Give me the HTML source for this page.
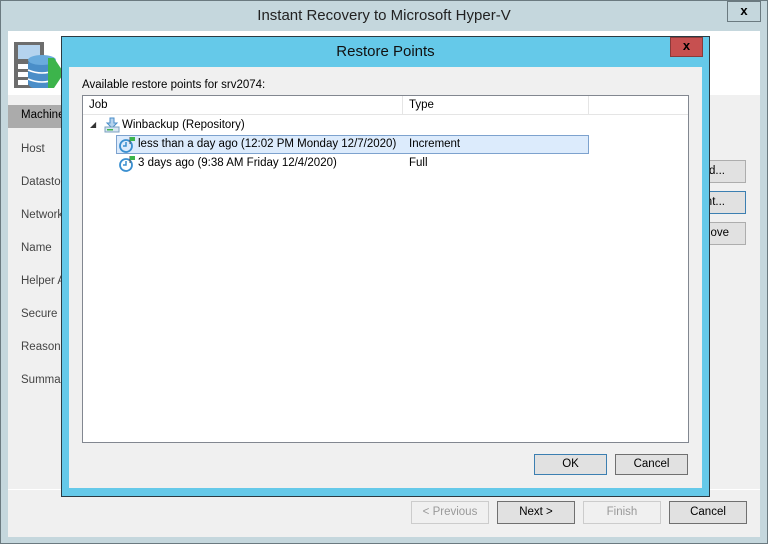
<!DOCTYPE html>
<html><head><style>
*{margin:0;padding:0;box-sizing:border-box}
body{width:768px;height:544px;position:relative;overflow:hidden;background:#c5d7dd;font-family:"Segoe UI","Liberation Sans",sans-serif;font-size:11.5px;color:#000}
.a{position:absolute}
.btn{position:absolute;height:23px;border:1px solid #adadad;background:#e1e1e1;text-align:center;line-height:21px;font-size:11.5px}
.nav{position:absolute;left:21px;color:#444;font-size:11.5px}
</style></head><body>
<div class="a" style="left:0;top:0;width:768px;height:544px;border:1px solid #6b7a80"></div>
<div class="a" style="left:0;top:7px;width:768px;text-align:center;font-size:15px;color:#222">Instant Recovery to Microsoft Hyper-V</div>
<div class="a" style="left:727px;top:1px;width:34px;height:21px;border:1px solid #6b7a80;text-align:center;font-weight:bold;font-size:13px;line-height:18px">x</div>
<div class="a" style="left:8px;top:31px;width:752px;height:506px;background:#f0f0f0"></div>
<div class="a" style="left:8px;top:31px;width:752px;height:64px;background:#fff"></div>
<svg class="a" style="left:14px;top:42px" width="50" height="48">
<rect x="0" y="0" width="30" height="46" fill="#6d6d6d"/>
<rect x="4" y="3" width="22" height="14" fill="#b5d3ee"/>
<rect x="4" y="22" width="10" height="5" fill="#fff"/><rect x="4" y="30" width="10" height="5" fill="#fff"/><rect x="4" y="38" width="10" height="5" fill="#fff"/>
<rect x="14" y="16" width="28" height="30" rx="6" fill="#4a8ec8"/>
<ellipse cx="28" cy="18" rx="14" ry="5" fill="#6aabdd"/>
<path d="M14 28 Q28 34 42 28 M14 37 Q28 43 42 37" stroke="#fff" stroke-width="1.5" fill="none"/>
<polygon points="34,16 40,16 50,31 40,46 34,46" fill="#3cb44b"/>
</svg>
<div class="a" style="left:8px;top:105px;width:60px;height:23px;background:#ababab"></div>
<div class="nav" style="top:109px;color:#000">Machine</div>
<div class="nav" style="top:143px">Host</div>
<div class="nav" style="top:176px">Datastore</div>
<div class="nav" style="top:209px">Network</div>
<div class="nav" style="top:242px">Name</div>
<div class="nav" style="top:275px">Helper A</div>
<div class="nav" style="top:308px">Secure R</div>
<div class="nav" style="top:341px">Reason</div>
<div class="nav" style="top:374px">Summary</div>
<div class="btn" style="left:670px;top:160px;width:76px;text-align:right;padding-right:20px">Add...</div>
<div class="btn" style="left:670px;top:191px;width:76px;border-color:#3c7fb1;text-align:right;padding-right:20px">Point...</div>
<div class="btn" style="left:670px;top:222px;width:76px;text-align:right;padding-right:16px">Remove</div>
<div class="a" style="left:8px;top:489px;width:752px;height:1px;background:#fff"></div>
<div class="btn" style="left:411px;top:501px;width:78px;background:#f0f0f0;border-color:#ccc;color:#999">&lt; Previous</div>
<div class="btn" style="left:497px;top:501px;width:78px;border-color:#707070">Next &gt;</div>
<div class="btn" style="left:583px;top:501px;width:78px;background:#f0f0f0;border-color:#ccc;color:#999">Finish</div>
<div class="btn" style="left:669px;top:501px;width:78px;border-color:#707070">Cancel</div>
<div class="a" style="left:61px;top:36px;width:649px;height:461px;background:#65c9e9;border:1px solid #2b3a42"></div>
<div class="a" style="left:61px;top:43px;width:649px;text-align:center;font-size:15px;color:#111">Restore Points</div>
<div class="a" style="left:670px;top:37px;width:33px;height:20px;background:#c75050;border:1px solid #8a3a3a;color:#000;text-align:center;font-weight:bold;font-size:13px;line-height:16px">x</div>
<div class="a" style="left:69px;top:67px;width:633px;height:421px;background:#f0f0f0"></div>
<div class="a" style="left:82px;top:79px">Available restore points for srv2074:</div>
<div class="a" style="left:82px;top:95px;width:607px;height:348px;background:#fff;border:1px solid #828790"></div>
<div class="a" style="left:83px;top:96px;width:605px;height:19px;border-bottom:1px solid #e5e5e5"></div>
<div class="a" style="left:402px;top:96px;width:1px;height:19px;background:#e5e5e5"></div>
<div class="a" style="left:588px;top:96px;width:1px;height:19px;background:#e5e5e5"></div>
<div class="a" style="left:89px;top:99px">Job</div>
<div class="a" style="left:409px;top:99px">Type</div>
<div class="a" style="left:90px;top:120px;font-size:8px;color:#333">◢</div>
<svg class="a" style="left:104px;top:117px" width="16" height="16"><path d="M6 1h4v5h3l-5 5-5-5h3z" fill="#b5d3ee" stroke="#4a8ec8"/><rect x="1" y="10" width="14" height="5" fill="#d7e6f2" stroke="#7ba0c0"/><rect x="3" y="12" width="6" height="1.5" fill="#3cb44b"/></svg>
<div class="a" style="left:122px;top:119px">Winbackup (Repository)</div>
<div class="a" style="left:116px;top:135px;width:473px;height:19px;background:#dcebfc;border:1px solid #7da2ce"></div>
<svg class="a" style="left:118px;top:136px" width="18" height="18"><circle cx="8" cy="10" r="6" fill="none" stroke="#3a8fd0" stroke-width="1.8"/><path d="M8 6v4h-3" stroke="#3a8fd0" stroke-width="1.5" fill="none"/><path d="M12 1v7" stroke="#555"/><path d="M12 1h5v4h-5z" fill="#3cb44b"/></svg>
<div class="a" style="left:138px;top:138px">less than a day ago (12:02 PM Monday 12/7/2020)</div>
<div class="a" style="left:409px;top:138px">Increment</div>
<svg class="a" style="left:118px;top:155px" width="18" height="18"><circle cx="8" cy="10" r="6" fill="none" stroke="#3a8fd0" stroke-width="1.8"/><path d="M8 6v4h-3" stroke="#3a8fd0" stroke-width="1.5" fill="none"/><path d="M12 1v7" stroke="#555"/><path d="M12 1h5v4h-5z" fill="#3cb44b"/></svg>
<div class="a" style="left:138px;top:157px">3 days ago (9:38 AM Friday 12/4/2020)</div>
<div class="a" style="left:409px;top:157px">Full</div>
<div class="btn" style="left:534px;top:454px;width:73px;height:21px;line-height:19px;border-color:#3c7fb1">OK</div>
<div class="btn" style="left:615px;top:454px;width:73px;height:21px;line-height:19px;border-color:#707070">Cancel</div>
</body></html>
